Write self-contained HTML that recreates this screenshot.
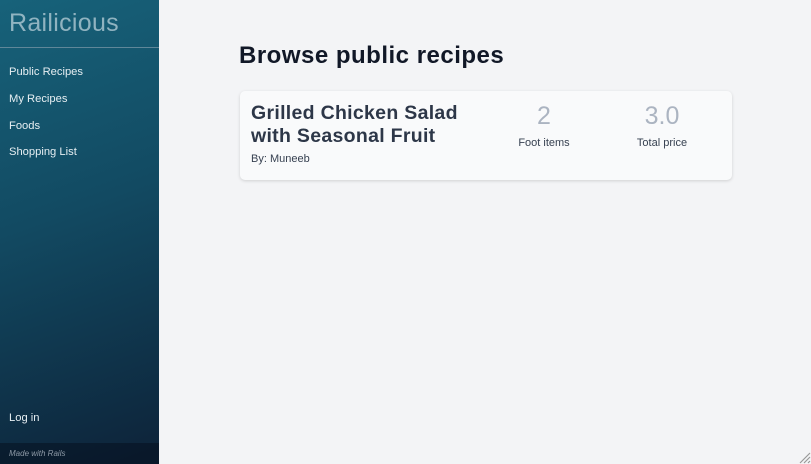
<!DOCTYPE html>
<html><head><meta charset="utf-8"><style>
*{margin:0;padding:0;box-sizing:border-box}
body{width:811px;height:464px;overflow:hidden;background:#f3f4f6;font-family:"Liberation Sans",sans-serif;position:relative}
.side{position:absolute;left:0;top:0;width:159px;height:464px;background:linear-gradient(160deg,#17627a 0%,#124a62 45%,#0d2238 100%);color:#e5edf2}
.logo{height:48px;border-bottom:1px solid #5f8799;padding:9px 0 0 9px;font-size:25px;font-weight:normal;color:rgba(185,208,218,0.75);letter-spacing:0.3px}
.nav a{display:block;position:absolute;left:9px;font-size:11.2px;color:#e6eef2;text-decoration:none}
.foot{position:absolute;left:0;bottom:0;width:159px;height:21px;background:rgba(5,12,25,0.45);font-size:8px;font-style:italic;color:#8d99a6;padding:6px 0 0 9px}
h1{position:absolute;left:239px;top:42px;font-size:24px;letter-spacing:0.5px;font-weight:bold;color:#111827}
.card{position:absolute;left:240px;top:91px;width:492px;height:89px;background:#f9fafb;border-radius:5px;box-shadow:0 1px 3px rgba(0,0,0,0.15)}
.t{position:absolute;left:11px;top:11px;font-size:19.5px;letter-spacing:0.3px;font-weight:bold;color:#2d3748;line-height:23px}
.by{position:absolute;left:11px;top:62px;font-size:11px;color:#374151}
.n{position:absolute;font-size:25px;font-weight:normal;color:rgba(138,150,168,0.7);text-align:center;width:100px;top:11px}
.l{position:absolute;font-size:11px;color:#374151;text-align:center;width:100px;top:46px}
</style></head><body>
<div class="side">
<div class="logo">Railicious</div>
<div class="nav">
<a style="top:66px">Public Recipes</a>
<a style="top:93px">My Recipes</a>
<a style="top:120px">Foods</a>
<a style="top:146px">Shopping List</a>
<a style="top:412px">Log in</a>
</div>
<div class="foot">Made with Rails</div>
</div>
<h1>Browse public recipes</h1>
<div class="card">
<div class="t">Grilled Chicken Salad<br>with Seasonal Fruit</div>
<div class="by">By: Muneeb</div>
<div class="n" style="left:254px">2</div>
<div class="l" style="left:254px">Foot items</div>
<div class="n" style="left:372px">3.0</div>
<div class="l" style="left:372px">Total price</div>
</div>
<svg style="position:absolute;right:0;bottom:0" width="14" height="14"><path d="M13 3L3 13M13 7L7 13M13 11L11 13" stroke="#999" stroke-width="1.2"/></svg>
</body></html>
